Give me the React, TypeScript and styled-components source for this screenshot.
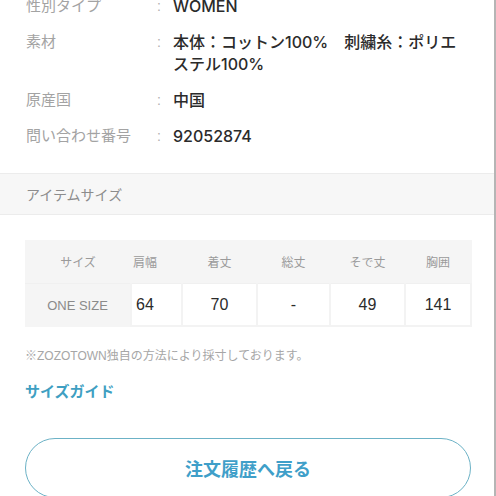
import React from 'react';
import styled, { createGlobalStyle } from 'styled-components';

const GlobalStyle = createGlobalStyle`
  html, body {
    margin: 0;
    padding: 0;
    background: #ffffff;
  }
  body {
    font-family: "Liberation Sans", "Noto Sans CJK JP", sans-serif;
    -webkit-font-smoothing: antialiased;
  }
`;

const details = [
  { label: '性別タイプ', value: ['WOMEN'] },
  { label: '素材', value: ['本体：コットン100%　刺繍糸：ポリエ', 'ステル100%'] },
  { label: '原産国', value: ['中国'] },
  { label: '問い合わせ番号', value: ['92052874'] },
];

const headers = ['サイズ', '肩幅', '着丈', '総丈', 'そで丈', '胸囲'];
const row = ['ONE SIZE', '64', '70', '-', '49', '141'];
const widths = [106, 51, 75, 73, 75, 66];

export default function App() {
  return (
    <Page>
      <GlobalStyle />

      <DetailList>
        {details.map((d) => (
          <DetailRow key={d.label}>
            <Label>{d.label}</Label>
            <Colon>:</Colon>
            <Value>
              {d.value.map((line) => (
                <div key={line}>{line}</div>
              ))}
            </Value>
          </DetailRow>
        ))}
      </DetailList>

      <SectionBand>アイテムサイズ</SectionBand>

      <Body>
        <SizeTable>
          <colgroup>
            {widths.map((w, i) => (
              <col key={i} style={{ width: w }} />
            ))}
          </colgroup>
          <thead>
            <tr>
              {headers.map((h, i) => (
                <HeadCell key={h} $left={i === 1}>{h}</HeadCell>
              ))}
            </tr>
          </thead>
          <tbody>
            <tr>
              {row.map((v, i) =>
                i === 0 ? (
                  <SizeName key={i}>{v}</SizeName>
                ) : (
                  <DataCell key={i} $left={i === 1}>{v}</DataCell>
                )
              )}
            </tr>
          </tbody>
        </SizeTable>

        <Note>※ZOZOTOWN独自の方法により採寸しております。</Note>

        <GuideLink>サイズガイド</GuideLink>

        <BackButton>注文履歴へ戻る</BackButton>
      </Body>
    </Page>
  );
}

const Page = styled.div`
  width: 494px;
  height: 496px;
  overflow: hidden;
  border-right: 2px solid #b5b5b5;
  background: #ffffff;
`;

const DetailList = styled.div`
  display: flex;
  flex-direction: column;
  gap: 14px;
  margin-top: -5px;
  padding: 0 0 0 26px;
`;

const DetailRow = styled.div`
  display: flex;
  align-items: flex-start;
  line-height: 22px;
`;

const Label = styled.div`
  width: 131px;
  flex-shrink: 0;
  color: #a3a3a3;
  font-size: 15px;
`;

const Colon = styled.div`
  width: 16px;
  flex-shrink: 0;
  color: #b0b0b0;
  font-size: 14px;
`;

const Value = styled.div`
  color: #2b2b2b;
  font-family: "Inter", "Noto Sans CJK JP", sans-serif;
  font-size: 16px;
  font-weight: 500;
  white-space: nowrap;
`;

const SectionBand = styled.div`
  margin-top: 26px;
  height: 40px;
  display: flex;
  align-items: center;
  padding-left: 26px;
  background: #f7f7f7;
  border-top: 1px solid #ececec;
  border-bottom: 1px solid #ececec;
  color: #8c8c8c;
  font-size: 14px;
`;

const Body = styled.div`
  padding: 25px 0 0 25px;
  display: flex;
  flex-direction: column;
`;

const SizeTable = styled.table`
  width: 446px;
  border-collapse: collapse;
  table-layout: fixed;
  background: #f5f5f5;
  border: none;
`;

const HeadCell = styled.th<{ $left?: boolean }>`
  height: 43px;
  padding: ${(p) => (p.$left ? '0 0 0 2px' : '0')};
  text-align: ${(p) => (p.$left ? 'left' : 'center')};
  color: #9a9a9a;
  font-size: 12px;
  font-weight: 400;
  border: none;
  border-bottom: 1px solid #f0f0f0;
`;

const SizeName = styled.td`
  height: 40px;
  text-align: center;
  color: #8a8a8a;
  font-size: 13px;
  border: none;
`;

const DataCell = styled.td<{ $left?: boolean }>`
  height: 40px;
  background: #ffffff;
  padding: ${(p) => (p.$left ? '0 0 0 4px' : '0')};
  text-align: ${(p) => (p.$left ? 'left' : 'center')};
  color: #2b2b2b;
  font-size: 16px;
  border: 2px solid #f3f3f3;
  border-top: none;
`;

const Note = styled.div`
  margin-top: 21px;
  color: #a6a6a6;
  font-size: 12px;
  line-height: 16px;
`;

const GuideLink = styled.div`
  margin-top: 18px;
  color: #3f9fc2;
  font-size: 15px;
  font-weight: 700;
  line-height: 20px;
`;

const BackButton = styled.div`
  margin-top: 36px;
  width: 446px;
  height: 60px;
  box-sizing: border-box;
  border: 1.5px solid #6cb2c6;
  border-radius: 30px;
  display: flex;
  align-items: center;
  justify-content: center;
  color: #3f9fc9;
  font-size: 18px;
  font-weight: 700;
`;
